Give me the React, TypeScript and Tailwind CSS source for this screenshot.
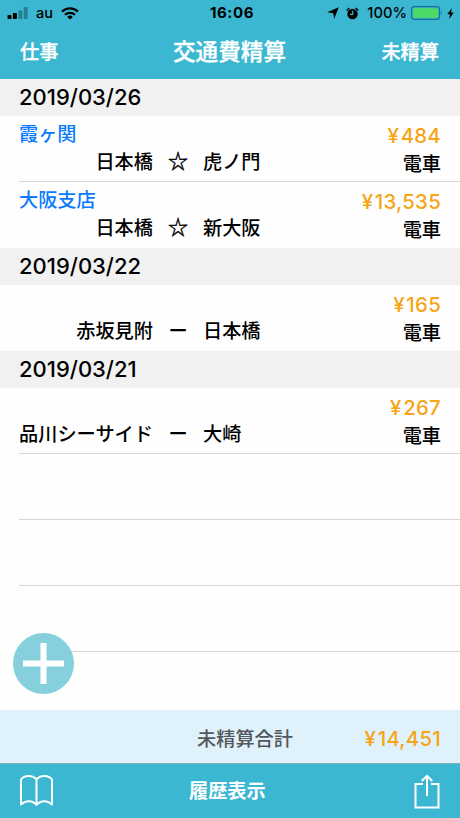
type Trip = { tag?: string; from: string; mark: string; to: string; price: string };
type Day = { date: string; trips: Trip[] };

const days: Day[] = [
  {
    date: "2019/03/26",
    trips: [
      { tag: "霞ヶ関", from: "日本橋", mark: "☆", to: "虎ノ門", price: "484" },
      { tag: "大阪支店", from: "日本橋", mark: "☆", to: "新大阪", price: "13,535" },
    ],
  },
  { date: "2019/03/22", trips: [{ from: "赤坂見附", mark: "ー", to: "日本橋", price: "165" }] },
  { date: "2019/03/21", trips: [{ from: "品川シーサイド", mark: "ー", to: "大崎", price: "267" }] },
];

function StatusBar() {
  return (
    <div className="flex h-[26px] items-center pl-[7px] pr-[6px] text-black">
      <div className="flex w-[200px] items-center">
        <svg width="21" height="12" viewBox="0 0 21 12">
          <rect x="0.5" y="8" width="4" height="4" rx="0.8" />
          <rect x="5.9" y="6" width="4" height="6" rx="0.8" />
          <rect x="11.3" y="3.2" width="4" height="8.8" rx="0.8" opacity="0.3" />
          <rect x="16.7" y="0" width="4" height="12" rx="0.8" opacity="0.3" />
        </svg>
        <span className="ml-[8px] text-[14.5px] leading-[26px]">au</span>
        <svg className="ml-[8px]" width="18" height="13" viewBox="0 0 18 13" fill="none" stroke="black" strokeWidth="2.2">
          <path d="M1 4.6a11.6 11.6 0 0 1 16 0" />
          <path d="M4 7.8a7.3 7.3 0 0 1 10 0" />
          <path d="M9 12.6L6.2 9.9a4.1 4.1 0 0 1 5.6 0z" fill="black" stroke="none" />
        </svg>
      </div>
      <span className="w-[50px] text-center text-[15px] font-bold leading-[26px] tracking-[0.6px] whitespace-nowrap">16:06</span>
      <div className="flex flex-1 items-center justify-end">
        <svg width="12" height="12" viewBox="0 0 12 12">
          <path d="M11.8 0.2L7.2 11.8L6.3 6.2L0.2 5.2Z" />
        </svg>
        <svg className="ml-[7px]" width="13" height="13" viewBox="0 0 13 13">
          <circle cx="6.5" cy="7" r="5.2" />
          <path d="M0.7 3.5L3.4 0.9M12.3 3.5L9.6 0.9" stroke="black" strokeWidth="1.4" />
          <path d="M6.7 3.8V7.4H4" fill="none" stroke="#3bb7d1" strokeWidth="1.2" />
        </svg>
        <span className="ml-[8px] text-[14.7px] leading-[26px]">100%</span>
        <svg className="ml-[4px]" width="32" height="14" viewBox="0 0 32 14">
          <rect x="0.6" y="0.6" width="28" height="12.8" rx="3" fill="none" stroke="#176d94" strokeWidth="1.1" />
          <rect x="2.2" y="2.2" width="24.8" height="9.6" rx="1.6" fill="#4cd964" />
          <path d="M30 4.6q1.8 2.4 0 4.8z" fill="#176d94" />
        </svg>
        <svg className="ml-[4px]" width="7" height="11" viewBox="0 0 7 11">
          <path d="M4.8 0L0.3 6.2H3L2.2 11L6.8 4.6H4z" />
        </svg>
      </div>
    </div>
  );
}

function Price({ value }: { value: string }) {
  return (
    <span className="text-[20.4px] tracking-[0.25px] text-[#f5a516]">
      <span className="mr-[1.5px]">¥</span>
      {value}
    </span>
  );
}

function TripRow({ trip, last }: { trip: Trip; last: boolean }) {
  return (
    <div className={`ml-[19px] flex h-[66px] justify-between pr-[19px] ${last ? "" : "border-b border-[#d6d6d8]"}`}>
      <div>
        <div className="h-[32px] pt-[4px] leading-[28px] text-[#0a7aff]">{trip.tag}</div>
        <div className="flex h-[28px] leading-[28px]">
          <span className="w-[134px] text-right whitespace-nowrap">{trip.from}</span>
          <span className="w-[50px] text-center">
            {trip.mark === "☆" ? (
              <span className="block h-[28px] font-['Noto_Sans_CJK_JP',sans-serif] text-[20px] leading-[25px] [-webkit-text-stroke:0.4px_black]">☆</span>
            ) : (
              trip.mark
            )}
          </span>
          <span>{trip.to}</span>
        </div>
      </div>
      <div className="pt-[6px] text-right leading-[28px]">
        <div className="h-[28px]">
          <Price value={trip.price} />
        </div>
        <div>電車</div>
      </div>
    </div>
  );
}

export default function App() {
  return (
    <div className="flex h-[818px] w-[460px] flex-col overflow-hidden bg-[#fefefe] font-['Inter','Noto_Sans_CJK_JP',sans-serif] text-[19.2px] font-medium text-black">
      <header className="h-[79px] shrink-0 bg-[#3bb7d1]">
        <StatusBar />
        <div className="flex h-[50px] items-center justify-between pl-[20px] pr-[21px] text-white [-webkit-text-stroke:0.3px_white]">
          <span className="w-[80px] pt-[2px]">仕事</span>
          <span className="pt-px text-[22.6px]">交通費精算</span>
          <span className="w-[80px] pt-[2px] text-right">未精算</span>
        </div>
      </header>
      <main className="flex-1">
        {days.map((day, d) => (
          <section key={day.date}>
            <h2 className="h-[37px] bg-[#f1f1f1] pl-[19px] text-[22px] leading-[37px]">{day.date}</h2>
            {day.trips.map((trip, i) => (
              <TripRow key={trip.price} trip={trip} last={i === day.trips.length - 1 && d < days.length - 1} />
            ))}
          </section>
        ))}
        {[0, 1, 2].map((n) => (
          <div key={n} className="ml-[19px] h-[66px] border-b border-[#d6d6d8]" />
        ))}
      </main>
      <button className="absolute left-[12.5px] top-[632.5px] flex size-[61px] items-center justify-center rounded-full bg-[#86d0de]">
        <svg width="41" height="41" viewBox="0 0 41 41" stroke="white" strokeWidth="6">
          <path d="M20.5 0V41M0 20.5H41" />
        </svg>
      </button>
      <div className="flex h-[54px] shrink-0 items-center justify-end border-b border-[#80afba] bg-[#dff2fb] pr-[19px] pt-[5px]">
        <span className="text-[#54565b]">未精算合計</span>
        <span className="w-[148px] text-right">
          <Price value="14,451" />
        </span>
      </div>
      <footer className="flex h-[54px] shrink-0 items-center bg-[#3bb7d1] px-[20px] text-white">
        <svg width="33" height="32" viewBox="0 0 33 32" fill="none" stroke="white" strokeWidth="2" strokeLinejoin="round">
          <path d="M16.5 4.5C14.5 1.8 11.5 1 8.5 1S2.8 2 1 4.5V29.5C5.5 25 12.5 25 16.5 30C20.5 25 27.5 25 32 29.5V4.5C30.2 2 27.5 1 24.5 1S18.5 1.8 16.5 4.5V30" />
        </svg>
        <span className="ml-[136px] pt-px font-bold">履歴表示</span>
        <svg className="ml-auto" width="26" height="35" viewBox="0 0 26 35" fill="none" stroke="white" strokeWidth="2">
          <path d="M9 10H1.5V33.5H24.5V10H17" />
          <path d="M13 22V2M7.8 7L13 1.8L18.2 7" />
        </svg>
      </footer>
    </div>
  );
}
